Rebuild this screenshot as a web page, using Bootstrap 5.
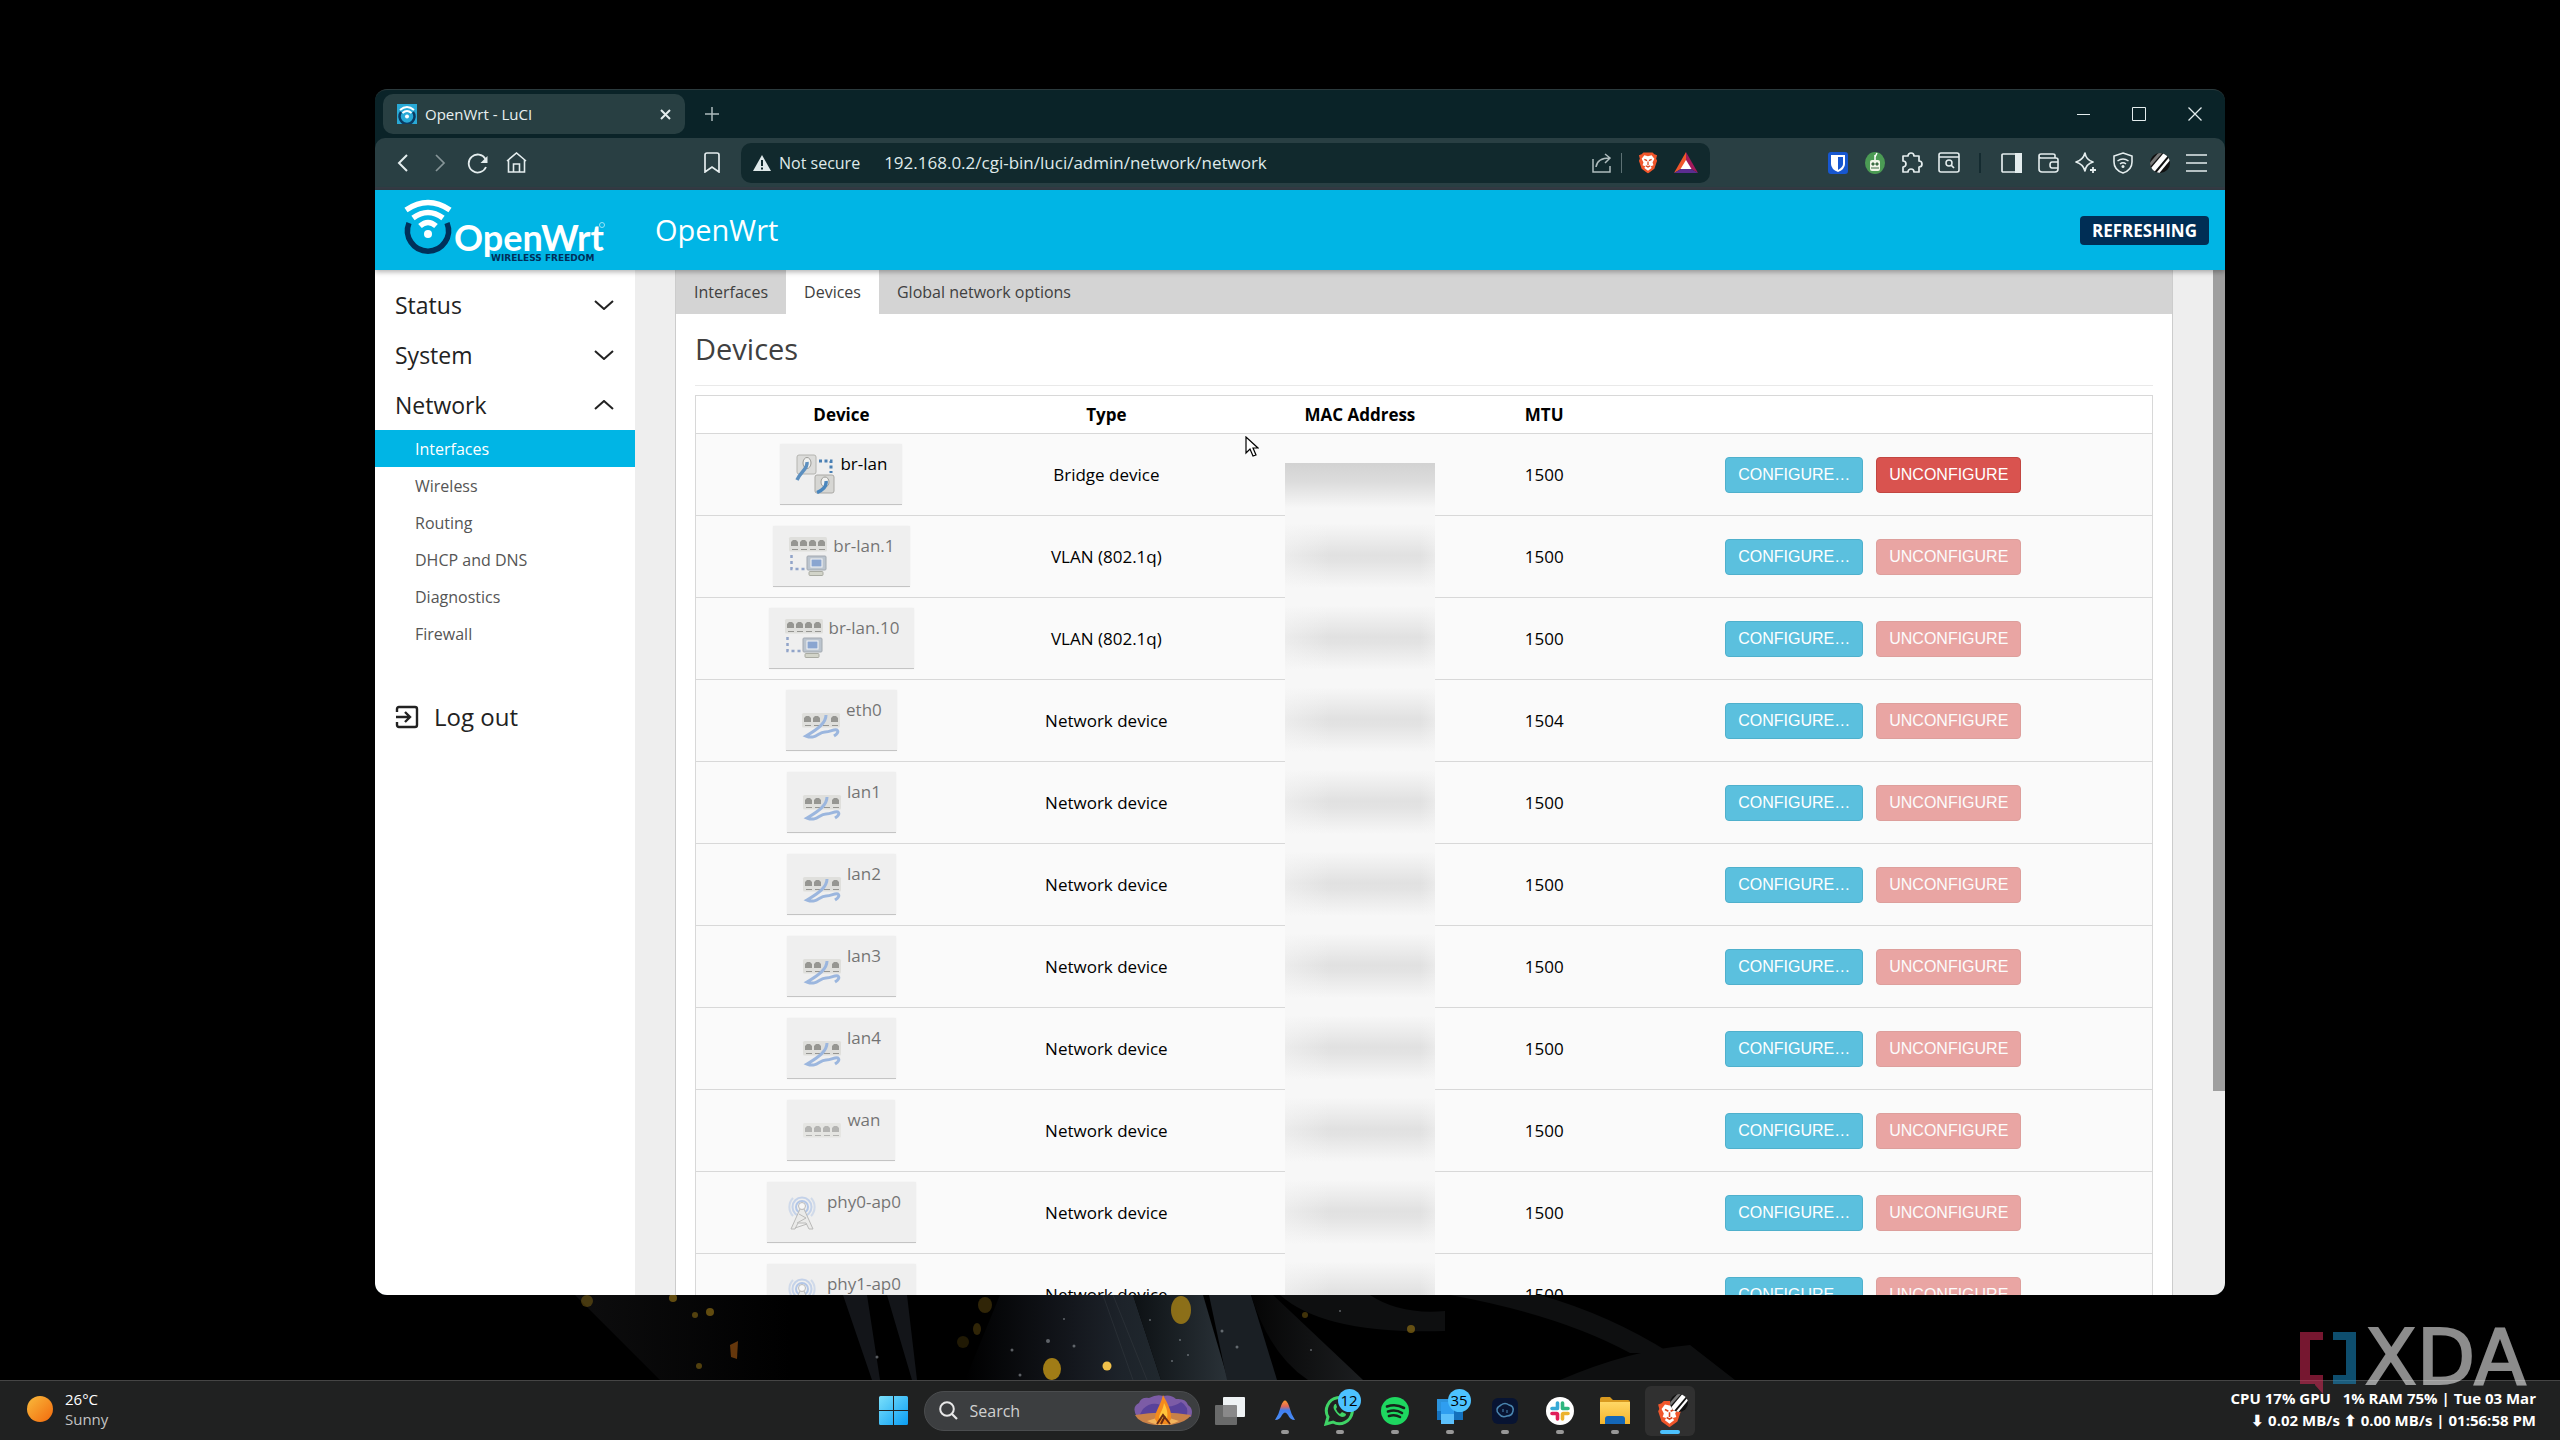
<!DOCTYPE html>
<html lang="en">
<head>
<meta charset="utf-8">
<meta name="viewport" content="width=device-width, initial-scale=1">
<title>OpenWrt - LuCI</title>
<link href="https://cdn.jsdelivr.net/npm/bootstrap@5.3.0/dist/css/bootstrap.min.css" rel="stylesheet">
<style>
body{font-family:"Open Sans","Noto Sans",sans-serif;font-size:16px;line-height:20px;color:#111;background:#000}
svg{display:block;flex:none}
a{text-decoration:none}
.desktop{background:#000;overflow:hidden}
.wallpaper{left:0;right:0;bottom:60px;width:100%;height:85px}
.stage{padding:89px 335px 85px 375px;min-height:0}
.browser{border-radius:12px;overflow:hidden;background:#0a2328;border-top:1px solid #2b3a3d}
/* browser chrome */
.tabstrip{height:48px;padding:0 2px 0 8px;color:#e8f0f1}
.tab-pill{width:302px;height:40px;border-radius:10px;background:#283f42;padding:0 14px;font-size:15px}
.chrome-btn{background:none;border:0;padding:0;color:#e4edee;display:flex;align-items:center;justify-content:center}
.tools{height:52px;background:#293f43;border-bottom:3px solid #343b44;padding:0 10px 0 8px;border-radius:10px 10px 0 0}
.tools .chrome-btn{width:38px;height:40px}
.ext .chrome-btn{width:37px}
.bookmark{margin-left:158px}
.address{height:40px;margin:0 109px 0 10px;border-radius:10px;background:#11292d;color:#dfe9ea;padding:0 12px 0 12px}
.address input{background:none;border:0;color:#dfe9ea;padding:0;outline:0;min-width:0;font-size:17px}
.addr-rule{width:1px;height:20px;background:#5d7174}
.ext-rule{width:26px}
.ext-rule::before{content:"";display:block;width:2px;height:20px;margin:auto;background:#142b30}
.winctl .chrome-btn{width:56px;height:48px}
/* LuCI */
.luci-head{height:80px;background:#00b5e5;color:#fff;padding:0 16px 0 20px;box-shadow:0 2px 5px rgba(0,0,0,.3);z-index:2}
.host{font-size:29px;line-height:40px;margin-left:49px;color:#fff}
.poll{height:29px;background:#002e55;border-radius:4px;padding:0 12px;font-size:17px;line-height:29px}
.lower{min-height:0}
.side{width:260px;background:#fff;padding-top:10px}
.side-top{height:50px;padding:0 21px 0 20px;font-size:23px;color:#222}
.side-sub{height:37px;padding-left:40px;color:#555}
.side-sub.current{background:#00b5e5;color:#fff}
.logout{margin-top:40px;gap:15px;font-size:24px}
.view{background:#eee;padding:0 40px}
.panel{background:#fff;border:1px solid #ccc;border-width:0 1px}
.luci-tabs{height:44px;background:#d4d4d4}
.luci-tabs a{padding:0 18px;color:#404040}
.luci-tabs a.current{background:#fff}
.panel-body{padding:0 19px}
.panel-title{height:72px;margin:0;font-size:29px;font-weight:400;color:#404040;border-bottom:1px solid #e9e9e9}
.devices{margin:9px 0 0;table-layout:fixed;border:1px solid #d8d8d8;font-size:17px;text-align:center;color:#000}
.devices th,.devices td{padding:0;vertical-align:middle;border-bottom:1px solid #d8d8d8;box-shadow:none;color:#000}
.devices thead tr{height:38px}
.devices tbody tr{height:82px;background:#fafafa}
.devices td{background:transparent}
.c-dev{width:20%}.c-type{width:16.4%}.c-mac{width:18.4%}.c-mtu{width:6.9%}
.port{background:#efefef;border-bottom:1px solid #c4c4c4;padding:10px 15px;gap:5px;vertical-align:middle;box-shadow:0 0 2px rgba(0,0,0,.05)}
.off>*{opacity:.52}
.veil{width:150px;top:-1px;bottom:-1px;background:
 linear-gradient(90deg,rgba(247,247,247,.5),rgba(247,247,247,0) 30%,rgba(247,247,247,0) 90%,rgba(247,247,247,.4)),
 linear-gradient(#f7f7f7 10%,#e1e1e1 48%,#e3e3e3 56%,#f7f7f7 88%)}
.veil-first{top:29px;background:linear-gradient(#d2d2d2,#dcdcdc 35%,#f7f7f7 85%)}
.acts{gap:13px}
.acts .btn{height:36px;padding:0 12px;border-radius:4px;font:16px/32px "Liberation Sans",Arial,sans-serif;color:#fff}
.btn-cfg{width:138px;background:#5bc0de;border:1px solid #4fb0cc}
.btn-del{width:145px;background:#d9534f;border:1px solid #c24641}
.acts .btn-del:disabled{background:#d9534f;border-color:#c24641;opacity:.5}
.scrolltrack{width:12px;background:#eee}
.scrollthumb{height:80.1%;background:#9e9e9e}
.pointer{left:1245px;top:436px}
/* taskbar */
.taskbar{height:60px;background:#202121;border-top:1px solid #454545;color:#fff;padding:0 24px}
.task-mid{gap:5px}
.task{width:50px;height:50px;border:0;padding:0;border-radius:6px;background:none;position:relative;display:flex;align-items:center;justify-content:center}
.task.run::after{content:"";position:absolute;bottom:2px;left:21px;width:8px;height:4px;border-radius:2px;background:#989898}
.task.front{background:#303030}
.task.front::after{left:15px;width:20px;background:#4cc2ff}
.count{position:absolute;top:3px;left:23px;height:23px;min-width:23px;padding:0 2px;border-radius:12px;background:#4cc2ff;color:#000;font-size:15px;line-height:22px}
.finder{width:276px;height:40px;border-radius:20px;background:#3c3e40;border:1px solid #4b4d4f;padding:0 6px 0 14px;gap:12px}
.finder input{background:none;border:0;outline:0;padding:0;color:#ddd;font-size:16px;min-width:0}
.finder input::placeholder{color:#d0d0d0;opacity:1}
.weather{padding:0 0 3px 3px;gap:12px;font-size:15px;line-height:20px}
.weather-note{color:#c4c4c4}
.stats{padding:0 0 3px;font-size:15px;line-height:22px;font-weight:700;text-align:right;white-space:pre}
.brandmark{right:34px;bottom:46px;opacity:.55;gap:9px;height:72px}
.brandmark span{font:76px/72px "DejaVu Sans",sans-serif;color:#fff;-webkit-text-stroke:2px #fff}
</style>
<script src="https://cdn.jsdelivr.net/npm/bootstrap@5.3.0/dist/js/bootstrap.bundle.min.js"></script>
</head>
<body>
<svg width="0" height="0" class="position-absolute">
 <defs>
  <linearGradient id="sun" x1="0" y1="0" x2="1" y2="1"><stop stop-color="#f9bb3c"/><stop offset="1" stop-color="#f2690d"/></linearGradient>
  <linearGradient id="win" x1="0" y1="0" x2="1" y2="1"><stop stop-color="#7be0fb"/><stop offset="1" stop-color="#0a9df2"/></linearGradient>
  <linearGradient id="fold" x1="0" y1="0" x2="0" y2="1"><stop stop-color="#ffd766"/><stop offset="1" stop-color="#f5b52c"/></linearGradient>
  <linearGradient id="arc" x1="0" y1="0" x2="0" y2="1"><stop stop-color="#ff9a2e"/><stop offset=".3" stop-color="#e0685a"/><stop offset=".5" stop-color="#3f7ff0"/><stop offset="1" stop-color="#4a8cf5"/></linearGradient>
 </defs>
 <symbol id="i-bridge" viewBox="0 0 40 40">
  <rect x="2" y="1" width="19" height="19" rx="2" fill="#dcdcda" stroke="#b4b4b0"/><ellipse cx="12" cy="9" rx="4" ry="5.500" fill="#f2f2f0" stroke="#9a9a96"/>
  <path d="M12 8C13 15 6 17 2 26" fill="none" stroke="#5c8fbf" stroke-width="3.500"/>
  <path d="M24 7h12v12" fill="none" stroke="#4a80b4" stroke-width="3" stroke-dasharray="3 2.500"/>
  <rect x="20" y="21" width="19" height="18" rx="2" fill="#d6d6d3" stroke="#aaa9a5"/><ellipse cx="30" cy="28" rx="4" ry="5" fill="#f2f2f0" stroke="#9a9a96"/>
  <path d="M31 27c1 6-3 9-9 11.500" fill="none" stroke="#4a86bd" stroke-width="3.500"/>
 </symbol>
 <symbol id="i-four" viewBox="0 0 40 15">
  <rect x="1" y="0" width="38" height="14.500" rx="1.500" fill="#d2d2cc"/>
  <g fill="#45453e"><path d="M3 9V5l2-2h3l2 2v4zM12 9V5l2-2h3l2 2v4zM21 9V5l2-2h3l2 2v4zM30 9V5l2-2h3l2 2v4z"/><path d="M4 12h6v1H4zM13 12h6v1h-6zM22 12h6v1h-6zM31 12h6v1h-6z"/></g>
 </symbol>
 <symbol id="i-vlan" viewBox="0 0 40 40">
  <use href="#i-four" y="1" width="40" height="15"/>
  <path d="M3.500 19v14h14" fill="none" stroke="#3c60a8" stroke-width="2.500" stroke-dasharray="3 3"/>
  <rect x="19" y="20" width="19" height="14" rx="1" fill="#8c9db0" stroke="#5f6c79"/><rect x="23" y="23" width="11" height="8" fill="#2f63b4" stroke="#fff"/><rect x="21" y="35.500" width="14" height="4" rx="1" fill="#b9bca8" stroke="#6b6e5c"/>
 </symbol>
 <symbol id="i-eth" viewBox="0 0 40 40">
  <use href="#i-four" y="13" width="40" height="15"/><rect x="20" y="15" width="9" height="10" fill="#d2d2cc"/>
  <path d="M25 15c0 8-8 14-20 21 10 4 12-4 19-4 6 0 8-3 12-2 2 2 0 4-3 6" fill="none" stroke="#4f83d0" stroke-width="3"/>
 </symbol>
 <symbol id="i-wan" viewBox="0 0 40 40"><use href="#i-four" y="13" width="40" height="15" opacity=".65"/></symbol>
 <symbol id="i-wifi" viewBox="0 0 40 40">
  <g fill="none" stroke="#7ca2e0" stroke-width="2"><circle cx="20" cy="15" r="6"/><circle cx="20" cy="15" r="9.500" opacity=".7"/><path d="M11 24A13 13 0 0 1 11 6M29 24A13 13 0 0 0 29 6" opacity=".5"/></g>
  <path d="M18 17L9 37h4l3-6h8l3 6h4L22 17z" fill="#e6e6e4" stroke="#8a8a88"/><path d="M15 31l9-5-7-4M13 36l12-4" fill="none" stroke="#8a8a88"/><circle cx="20" cy="14" r="3.500" fill="#fff" stroke="#8a8a8a"/>
 </symbol>
 <symbol id="i-brave" viewBox="0 0 22 24">
  <path d="M6 1h10l2 2 3 1-1 4 1 2-3 9-7 5-7-5-3-9 1-2-1-4 3-1z" fill="#f1562b"/>
  <path d="M11 5l4-1 3 4-2 4 1 3-3 1 1 2-4 3-4-3 1-2-3-1 1-3-2-4 3-4z" fill="#fff"/>
  <path d="M7 8.500l3 1.500M15 8.500L12 10M11 11v4M8.500 15.500L11 17l2.500-1.500" fill="none" stroke="#d9441c" stroke-width="1.400"/>
 </symbol>
 <symbol id="i-down" viewBox="0 0 20 10"><path d="M1 1l9 8 9-8" fill="none" stroke="#222" stroke-width="2"/></symbol>
 <symbol id="i-stripe" viewBox="0 0 20 20"><clipPath id="rc"><circle cx="10" cy="10" r="10"/></clipPath><g clip-path="url(#rc)"><path fill="#111" d="M0 0h20v20H0z"/><path d="M-2 14L12-2" stroke="#777" stroke-width="3"/><path d="M1 19L17 0" stroke="#fff" stroke-width="5"/><path d="M7 21L21 4" stroke="#fff" stroke-width="2.500"/></g></symbol>
</svg>

<div class="desktop vh-100 d-flex flex-column position-relative">
 <svg class="wallpaper position-absolute" viewBox="0 0 2560 85" preserveAspectRatio="xMidYMid slice">
  <defs>
   <linearGradient id="w1"><stop stop-color="#000"/><stop offset=".55" stop-color="#14171d"/><stop offset=".8" stop-color="#1d232a"/><stop offset="1" stop-color="#20282e"/></linearGradient>
   <linearGradient id="w2"><stop stop-color="#0d1114"/><stop offset="1" stop-color="#2a3238"/></linearGradient>
   <linearGradient id="w3"><stop stop-color="#050505"/><stop offset="1" stop-color="#1c1e20"/></linearGradient>
   <linearGradient id="w4"><stop stop-color="#0d0d0e"/><stop offset="1" stop-color="#000"/></linearGradient>
  </defs>
  <path d="M575 0H790V85H660Z" fill="url(#w4)"/>
  <path d="M843 0h24l13 85h-8zM887 0h20l10 85h-5z" fill="#131519"/>
  <path d="M1000 0h133l28 85H965Z" fill="url(#w1)"/>
  <path d="M1133 0h70l25 85h-67z" fill="url(#w2)"/>
  <path d="M1209 0h42l26 85h-50z" fill="#1a1f24"/>
  <path d="M1251 0h22l90 85h-55Q1270 60 1251 0z" fill="url(#w3)"/>
  <path d="M1280 0h90q30 20 75 16v20q-120 4-165-36z" fill="#0e0f10"/>
  <path d="M1450 0h90q70 20 130 58h-40Q1560 20 1450 0zM1560 85q70-30 130-35l45 35z" fill="#0e0f10"/>
  <path d="M1103 0l30 85M1113 0l34 85" stroke="#3c4248" opacity=".4"/>
  <g fill="#a07c16"><ellipse cx="1181" cy="15" rx="10" ry="14" opacity=".85"/><ellipse cx="1052" cy="74" rx="9" ry="11"/><circle cx="1107" cy="71" r="4.500" fill="#f0c04a"/><ellipse cx="985" cy="10" rx="7" ry="8" opacity=".3"/><ellipse cx="977" cy="34" rx="4" ry="6" opacity=".3"/><ellipse cx="963" cy="47" rx="6" ry="6" opacity=".2"/><circle cx="587" cy="6" r="6" opacity=".4"/><circle cx="673" cy="3" r="4" opacity=".6"/><circle cx="710" cy="17" r="4" opacity=".6"/><circle cx="695" cy="20" r="3" opacity=".5"/><path d="M730 50l8-4-1 18-6-2z" opacity=".6" fill="#a65a12"/><circle cx="699" cy="71" r="3" opacity=".5"/><circle cx="1411" cy="34" r="4" opacity=".6"/><circle cx="1305" cy="20" r="3" opacity=".4"/></g>
  <g fill="#aeb4ba" opacity=".5"><circle cx="1048" cy="46" r="2"/><circle cx="1074" cy="51" r="1.500"/><circle cx="1150" cy="25" r="1"/><circle cx="1180" cy="45" r="1"/><circle cx="1188" cy="60" r="1"/><circle cx="1172" cy="66" r="1"/><circle cx="1222" cy="36" r="1.500"/><circle cx="1237" cy="52" r="1.500"/><circle cx="1064" cy="24" r="1"/><circle cx="1012" cy="55" r="1.500"/><circle cx="1020" cy="80" r="1.500"/><circle cx="877" cy="62" r="1.500"/><circle cx="1340" cy="16" r="1"/><circle cx="1311" cy="55" r="1"/></g>
 </svg>

 <main class="stage flex-grow-1 d-flex">
  <section class="browser flex-grow-1 d-flex flex-column">
   <div class="tabstrip flex-shrink-0 d-flex align-items-center">
    <div class="tab-pill d-flex align-items-center">
     <svg width="20" height="20" viewBox="0 0 20 20"><path fill="#29a9d6" d="M0 0h20v20H0z"/><path d="M4 8a7.500 7.500 0 1 0 12 0" fill="none" stroke="#0b3b63" stroke-width="2.500"/><path d="M3 6q7-6 14 0M5.500 9q4.500-4 9 0" fill="none" stroke="#fff" stroke-width="2"/><circle cx="10" cy="12.500" r="2" fill="#fff"/></svg>
     <span class="ms-2 flex-grow-1">OpenWrt - LuCI</span>
     <button class="chrome-btn" aria-label="Close tab"><svg width="11" height="11" viewBox="0 0 11 11"><path d="M1 1l9 9M10 1l-9 9" stroke="currentColor" stroke-width="2"/></svg></button>
    </div>
    <button class="chrome-btn ms-3 ps-1 opacity-75" aria-label="New tab"><svg width="14" height="14" viewBox="0 0 14 14"><path d="M7 0v14M0 7h14" stroke="currentColor" stroke-width="1.500"/></svg></button>
    <div class="winctl d-flex ms-auto">
     <button class="chrome-btn" aria-label="Minimize"><svg width="13" height="13" viewBox="0 0 13 13"><path d="M0 6.500h13" stroke="currentColor"/></svg></button>
     <button class="chrome-btn" aria-label="Maximize"><svg width="14" height="14" viewBox="0 0 14 14"><path d="M.5.5h13v13H.5z" fill="none" stroke="currentColor"/></svg></button>
     <button class="chrome-btn" aria-label="Close"><svg width="14" height="14" viewBox="0 0 14 14"><path d="M.5.5l13 13M13.500.5l-13 13" stroke="currentColor" stroke-width="1.300"/></svg></button>
    </div>
   </div>
   <div class="tools flex-shrink-0 d-flex align-items-center">
    <button class="chrome-btn" aria-label="Back"><svg width="11" height="18" viewBox="0 0 11 18"><path d="M10 1L2 9l8 8" fill="none" stroke="currentColor" stroke-width="2"/></svg></button>
    <button class="chrome-btn opacity-50" aria-label="Forward"><svg width="11" height="18" viewBox="0 0 11 18"><path d="M1 1l8 8-8 8" fill="none" stroke="currentColor" stroke-width="1.700"/></svg></button>
    <button class="chrome-btn" aria-label="Reload"><svg width="22" height="22" viewBox="0 0 22 22"><path d="M18.500 7A9 9 0 1 0 19 15" fill="none" stroke="currentColor" stroke-width="1.800"/><path d="M20.500 4v7h-7z" fill="currentColor"/></svg></button>
    <button class="chrome-btn" aria-label="Home"><svg width="21" height="21" viewBox="0 0 21 21"><path d="M1 9l9.500-8L20 9M2.500 8v12h16V8M7.500 20v-8h6v8" fill="none" stroke="currentColor" stroke-width="1.600"/></svg></button>
    <button class="chrome-btn bookmark" aria-label="Bookmark"><svg width="16" height="21" viewBox="0 0 16 21"><path d="M1 3q0-2 2-2h10q2 0 2 2v17l-7-5-7 5z" fill="none" stroke="currentColor" stroke-width="1.700"/></svg></button>
    <div class="address flex-grow-1 d-flex align-items-center">
     <svg width="18" height="16" viewBox="0 0 18 16"><path d="M9 0l9 16H0z" fill="#dfe9ea"/><path d="M9 5v6M9 12.500v2" stroke="#11292d" stroke-width="2"/></svg>
     <label for="url" class="ms-2 me-4">Not secure</label>
     <input id="url" class="flex-grow-1" value="192.168.0.2/cgi-bin/luci/admin/network/network">
     <button class="chrome-btn opacity-75" aria-label="Share"><svg width="21" height="20" viewBox="0 0 21 20"><path d="M1 6v13h17v-6M4 14q1-9 14-9M13 1l5 4-5 5" fill="none" stroke="currentColor" stroke-width="1.500"/></svg></button>
     <span class="addr-rule"></span>
     <svg class="ms-3 me-3" width="20" height="23" viewBox="0 0 22 24"><use href="#i-brave" width="22" height="24"/></svg>
     <svg width="24" height="21" viewBox="0 0 24 21"><path d="M12 0L0 21l12-7z" fill="#f1562b"/><path d="M12 0l12 21-12-7z" fill="#a3195b"/><path d="M0 21h24l-12-7z" fill="#5b2d90"/><path d="M12 8l-5.500 9h11z" fill="#fff"/></svg>
    </div>
    <div class="ext d-flex align-items-center">
     <button class="chrome-btn" aria-label="Bitwarden"><svg width="20" height="22" viewBox="0 0 20 22"><rect width="20" height="22" rx="3" fill="#1757d0"/><path d="M3 3h14v9q0 5-7 8-7-3-7-8z" fill="#fff"/><path d="M10 5h5v7q0 3-5 6z" fill="#1757d0"/></svg></button>
     <button class="chrome-btn" aria-label="Robot"><svg width="20" height="22" viewBox="0 0 20 22"><ellipse cx="10" cy="11" rx="10" ry="11" fill="#4b9b54"/><path d="M10 3v6M12 1l-2 4" stroke="#fff" stroke-width="1.500"/><rect x="5" y="8" width="10" height="11" rx="2" fill="#f0f4e8"/><path d="M7 11h2v2H7zM11 11h2v2h-2zM6 16h8" stroke="#3b6b42" fill="#3b6b42"/></svg></button>
     <button class="chrome-btn" aria-label="Extensions"><svg width="22" height="22" viewBox="0 0 22 22"><path d="M2 4h5a3 3 0 0 1 6 0h5v5a3 3 0 0 1 0 6v5h-5a3 3 0 0 0-6 0H2v-5a3 3 0 0 0 0-6z" fill="none" stroke="currentColor" stroke-width="1.700" stroke-linejoin="round"/></svg></button>
     <button class="chrome-btn" aria-label="Page search"><svg width="22" height="21" viewBox="0 0 22 21"><rect x="1" y="1" width="20" height="19" rx="2" fill="none" stroke="currentColor" stroke-width="1.600"/><path d="M1 5h20" stroke="currentColor" stroke-width="1.600"/><circle cx="11" cy="11" r="3" fill="none" stroke="currentColor" stroke-width="1.500"/><path d="M13 13l3 3" stroke="currentColor" stroke-width="1.700"/></svg></button>
     <span class="ext-rule"></span>
     <button class="chrome-btn" aria-label="Sidebar"><svg width="21" height="20" viewBox="0 0 21 20"><rect x="1" y="1" width="19" height="18" rx="1" fill="none" stroke="currentColor" stroke-width="1.700"/><path d="M14 0h7v20h-7z" fill="currentColor"/></svg></button>
     <button class="chrome-btn" aria-label="Wallet"><svg width="21" height="20" viewBox="0 0 21 20"><path d="M17 5V2q0-1-2-1H3Q1 1 1 3v13q0 3 3 3h13q3 0 3-3V7q0-2-2-2H3Q1 5 1 3M20 9h-6q-2 0-2 3t2 3h6" fill="none" stroke="currentColor" stroke-width="1.600"/></svg></button>
     <button class="chrome-btn" aria-label="Leo"><svg width="22" height="22" viewBox="0 0 22 22"><path d="M10 1q1 7 8 9-7 2-8 9-2-7-9-9 7-2 9-9z" fill="none" stroke="currentColor" stroke-width="1.700" stroke-linejoin="round"/><path d="M18 15v6M15 18h6" stroke="currentColor" stroke-width="1.800"/></svg></button>
     <button class="chrome-btn" aria-label="VPN"><svg width="20" height="22" viewBox="0 0 20 22"><path d="M10 1l9 3v6q0 8-9 11Q1 18 1 10V4z" fill="none" stroke="currentColor" stroke-width="1.600"/><path d="M4.500 9q5.500-4 11 0M7 12q3-2.500 6 0" fill="none" stroke="currentColor" stroke-width="1.500"/><circle cx="10" cy="14.500" r="1.500" fill="currentColor"/></svg></button>
     <button class="chrome-btn" aria-label="Profile"><svg width="20" height="20"><use href="#i-stripe"/></svg></button>
     <button class="chrome-btn" aria-label="Menu"><svg width="21" height="18" viewBox="0 0 21 18"><path d="M0 1h21M0 9h21M0 17h21" stroke="currentColor" stroke-width="1.700"/></svg></button>
    </div>
   </div>

   <header class="luci-head flex-shrink-0 d-flex align-items-center position-relative">
    <svg width="211" height="80" viewBox="0 0 211 80" role="img" aria-label="OpenWrt wireless freedom">
     <path d="M14 33a20.500 20.500 0 1 0 38 0" fill="none" stroke="#00305a" stroke-width="5.500"/>
     <g fill="none" stroke="#fff" stroke-width="5.500"><path d="M11 20q22-15 44 0"/><path d="M18 28q15-11 30 0"/><path d="M25 36q8-7 16 0"/></g><circle cx="33" cy="44" r="4" fill="#fff"/>
     <text x="59" y="61" font-family="Lato,sans-serif" font-weight="700" font-size="36" fill="#fff">OpenWrt</text>
     <text x="96" y="71" font-family="DejaVu Sans,sans-serif" font-weight="700" font-size="9" fill="#00305a">WIRELESS FREEDOM</text>
     <circle cx="207" cy="35" r="2.500" fill="none" stroke="#9be3f7"/>
    </svg>
    <a class="host" href="#">OpenWrt</a>
    <span class="poll ms-auto fw-bold">REFRESHING</span>
   </header>

   <div class="lower flex-grow-1 d-flex overflow-hidden">
    <nav class="side flex-shrink-0">
     <a class="side-top d-flex align-items-center justify-content-between" href="#">Status<svg width="20" height="10"><use href="#i-down"/></svg></a>
     <a class="side-top d-flex align-items-center justify-content-between" href="#">System<svg width="20" height="10"><use href="#i-down"/></svg></a>
     <a class="side-top d-flex align-items-center justify-content-between" href="#">Network<svg width="20" height="10" viewBox="0 0 20 10"><path d="M1 9l9-8 9 8" fill="none" stroke="#222" stroke-width="2"/></svg></a>
     <a class="side-sub current d-flex align-items-center" href="#">Interfaces</a>
     <a class="side-sub d-flex align-items-center" href="#">Wireless</a>
     <a class="side-sub d-flex align-items-center" href="#">Routing</a>
     <a class="side-sub d-flex align-items-center" href="#">DHCP and DNS</a>
     <a class="side-sub d-flex align-items-center" href="#">Diagnostics</a>
     <a class="side-sub d-flex align-items-center" href="#">Firewall</a>
     <a class="side-top logout d-flex align-items-center" href="#"><svg width="24" height="24" viewBox="0 0 24 24"><path d="M2 7V4q0-2 2-2h16q2 0 2 2v16q0 2-2 2H4q-2 0-2-2v-3M1 12h14M10 7l5 5-5 5" fill="none" stroke="#222" stroke-width="2.400"/></svg>Log out</a>
    </nav>
    <div class="view flex-grow-1">
     <div class="panel">
      <nav class="luci-tabs d-flex">
       <a class="d-flex align-items-center" href="#">Interfaces</a>
       <a class="current d-flex align-items-center" href="#">Devices</a>
       <a class="d-flex align-items-center" href="#">Global network options</a>
      </nav>
      <div class="panel-body">
       <h2 class="panel-title d-flex align-items-center">Devices</h2>
       <table class="table devices">
        <thead><tr><th class="c-dev">Device</th><th class="c-type">Type</th><th class="c-mac">MAC Address</th><th class="c-mtu">MTU</th><th></th></tr></thead>
        <tbody>
         <tr><td><span class="port d-inline-flex"><svg width="40" height="40"><use href="#i-bridge"/></svg><span>br-lan</span></span></td><td>Bridge device</td><td class="position-relative"><div class="veil veil-first position-absolute start-50 translate-middle-x"></div></td><td>1500</td><td><div class="acts d-flex justify-content-center"><button class="btn btn-cfg">CONFIGURE…</button><button class="btn btn-del">UNCONFIGURE</button></div></td></tr>
         <tr><td><span class="port off d-inline-flex"><svg width="40" height="40"><use href="#i-vlan"/></svg><span>br-lan.1</span></span></td><td>VLAN (802.1q)</td><td class="position-relative"><div class="veil position-absolute start-50 translate-middle-x"></div></td><td>1500</td><td><div class="acts d-flex justify-content-center"><button class="btn btn-cfg">CONFIGURE…</button><button class="btn btn-del" disabled>UNCONFIGURE</button></div></td></tr>
         <tr><td><span class="port off d-inline-flex"><svg width="40" height="40"><use href="#i-vlan"/></svg><span>br-lan.10</span></span></td><td>VLAN (802.1q)</td><td class="position-relative"><div class="veil position-absolute start-50 translate-middle-x"></div></td><td>1500</td><td><div class="acts d-flex justify-content-center"><button class="btn btn-cfg">CONFIGURE…</button><button class="btn btn-del" disabled>UNCONFIGURE</button></div></td></tr>
         <tr><td><span class="port off d-inline-flex"><svg width="40" height="40"><use href="#i-eth"/></svg><span>eth0</span></span></td><td>Network device</td><td class="position-relative"><div class="veil position-absolute start-50 translate-middle-x"></div></td><td>1504</td><td><div class="acts d-flex justify-content-center"><button class="btn btn-cfg">CONFIGURE…</button><button class="btn btn-del" disabled>UNCONFIGURE</button></div></td></tr>
         <tr><td><span class="port off d-inline-flex"><svg width="40" height="40"><use href="#i-eth"/></svg><span>lan1</span></span></td><td>Network device</td><td class="position-relative"><div class="veil position-absolute start-50 translate-middle-x"></div></td><td>1500</td><td><div class="acts d-flex justify-content-center"><button class="btn btn-cfg">CONFIGURE…</button><button class="btn btn-del" disabled>UNCONFIGURE</button></div></td></tr>
         <tr><td><span class="port off d-inline-flex"><svg width="40" height="40"><use href="#i-eth"/></svg><span>lan2</span></span></td><td>Network device</td><td class="position-relative"><div class="veil position-absolute start-50 translate-middle-x"></div></td><td>1500</td><td><div class="acts d-flex justify-content-center"><button class="btn btn-cfg">CONFIGURE…</button><button class="btn btn-del" disabled>UNCONFIGURE</button></div></td></tr>
         <tr><td><span class="port off d-inline-flex"><svg width="40" height="40"><use href="#i-eth"/></svg><span>lan3</span></span></td><td>Network device</td><td class="position-relative"><div class="veil position-absolute start-50 translate-middle-x"></div></td><td>1500</td><td><div class="acts d-flex justify-content-center"><button class="btn btn-cfg">CONFIGURE…</button><button class="btn btn-del" disabled>UNCONFIGURE</button></div></td></tr>
         <tr><td><span class="port off d-inline-flex"><svg width="40" height="40"><use href="#i-eth"/></svg><span>lan4</span></span></td><td>Network device</td><td class="position-relative"><div class="veil position-absolute start-50 translate-middle-x"></div></td><td>1500</td><td><div class="acts d-flex justify-content-center"><button class="btn btn-cfg">CONFIGURE…</button><button class="btn btn-del" disabled>UNCONFIGURE</button></div></td></tr>
         <tr><td><span class="port off d-inline-flex"><svg width="40" height="40"><use href="#i-wan"/></svg><span>wan</span></span></td><td>Network device</td><td class="position-relative"><div class="veil position-absolute start-50 translate-middle-x"></div></td><td>1500</td><td><div class="acts d-flex justify-content-center"><button class="btn btn-cfg">CONFIGURE…</button><button class="btn btn-del" disabled>UNCONFIGURE</button></div></td></tr>
         <tr><td><span class="port off d-inline-flex"><svg width="40" height="40"><use href="#i-wifi"/></svg><span>phy0-ap0</span></span></td><td>Network device</td><td class="position-relative"><div class="veil position-absolute start-50 translate-middle-x"></div></td><td>1500</td><td><div class="acts d-flex justify-content-center"><button class="btn btn-cfg">CONFIGURE…</button><button class="btn btn-del" disabled>UNCONFIGURE</button></div></td></tr>
         <tr><td><span class="port off d-inline-flex"><svg width="40" height="40"><use href="#i-wifi"/></svg><span>phy1-ap0</span></span></td><td>Network device</td><td class="position-relative"><div class="veil position-absolute start-50 translate-middle-x"></div></td><td>1500</td><td><div class="acts d-flex justify-content-center"><button class="btn btn-cfg">CONFIGURE…</button><button class="btn btn-del" disabled>UNCONFIGURE</button></div></td></tr>
        </tbody>
       </table>
      </div>
     </div>
    </div>
    <div class="scrolltrack flex-shrink-0"><div class="scrollthumb"></div></div>
   </div>
  </section>
 </main>

 <footer class="taskbar flex-shrink-0 d-flex align-items-center position-relative">
  <div class="col d-flex align-items-center weather">
   <svg width="26" height="26"><circle cx="13" cy="13" r="13" fill="url(#sun)"/></svg>
   <div><div>26°C</div><div class="weather-note">Sunny</div></div>
  </div>
  <div class="task-mid d-flex align-items-center">
   <button class="task" aria-label="Start"><svg width="29" height="29" viewBox="0 0 29 29"><path d="M1.500 0H14v14H0V1.500Q0 0 1.500 0zM15 0h12.500Q29 0 29 1.500V14H15zM0 15h14v14H1.500Q0 29 0 27.500zM15 15h14v12.500q0 1.500-1.500 1.500H15z" fill="url(#win)"/></svg></button>
   <div class="finder d-flex align-items-center">
    <svg width="19" height="19" viewBox="0 0 19 19"><circle cx="8" cy="8" r="6.800" fill="none" stroke="#e8e8e8" stroke-width="2"/><path d="M13 13l5 5" stroke="#e8e8e8" stroke-width="2.200"/></svg>
    <input type="search" class="flex-grow-1" placeholder="Search" aria-label="Search">
    <svg width="60" height="32" viewBox="0 0 60 32"><path d="M4 22Q-2 12 6 8q2-6 10-5 8-4 14-2 8-2 13 3 10-1 12 6 6 4 3 12z" fill="#7c5ca6"/><path d="M10 14q8-8 18-4t20-3q8 4 6 14H6z" fill="#59429a"/><path d="M2 20q28-5 56 0-4 7-20 10H22Q6 28 2 20z" fill="#c98148"/><path d="M14 26q16-7 32 0-16 8-32 0z" fill="#f3b45c"/><path d="M30 0c4 8 9 15 8 24l-3 5H25l-3-5c0-8 5-12 8-24z" fill="#f48a1c"/><path d="M31 8c3 6 4 9 3 16h-8c0-6 4-8 5-16z" fill="#ffc43a"/><path d="M24 29l6-9 7 9M28 29l4-8" stroke="#6b2c12" stroke-width="2" fill="none"/></svg>
   </div>
   <button class="task" aria-label="Task view"><svg width="30" height="28" viewBox="0 0 30 28"><rect x="8" width="22" height="20" rx="1" fill="#eef2f4"/><rect y="8" width="22" height="20" rx="1" fill="#777" opacity=".85"/></svg></button>
   <button class="task run" aria-label="Launcher"><svg width="22" height="22" viewBox="0 0 22 22"><path d="M1 20Q5 14 7 6q4-11 8 0 2 8 6 14-5 0-7-5-3-5-6 0-2 5-7 5z" fill="url(#arc)"/></svg></button>
   <button class="task run" aria-label="WhatsApp"><svg width="31" height="31" viewBox="0 0 31 31"><path d="M2 29l2-7A13 13 0 1 1 9 27z" fill="#202121" stroke="#3fd366" stroke-width="3"/><path d="M11 9q-3 3 0 7 3 5 7 6 4 0 4-3l-4-2-2 2q-3-2-4-5l1-2-1-3z" fill="#3fd366"/></svg><span class="count">12</span></button>
   <button class="task run" aria-label="Spotify"><svg width="28" height="28" viewBox="0 0 28 28"><circle cx="14" cy="14" r="14" fill="#1ed760"/><path d="M6 9.500q9-3 17 1.500M7 14.500q8-2.500 14 1.500M8 19q6-2 11 1" fill="none" stroke="#16231b" stroke-width="2.600" stroke-linecap="round"/></svg></button>
   <button class="task run" aria-label="Phone"><svg width="30" height="28" viewBox="0 0 30 28"><path d="M2 2h16v20H2z" fill="#2b93dd"/><path d="M2 14h26v9H2z" fill="#1471bd"/><path d="M6 5h13v22H6z" fill="#2f9ef0"/><path d="M6 17h13v10H6z" fill="#5cc0fb"/></svg><span class="count">35</span></button>
   <button class="task run" aria-label="Assistant"><svg width="26" height="26" viewBox="0 0 26 26"><rect width="26" height="26" rx="6" fill="#081432"/><path d="M9 7q4-3 8 0 5 1 4 6-1 5-6 5-5 2-8-2-5-5 2-9z" fill="none" stroke="#4a86b0" stroke-width="1.500"/><path d="M11 11v3M15 12v3" stroke="#4a86b0"/></svg></button>
   <button class="task run" aria-label="Slack"><svg width="28" height="28" viewBox="0 0 28 28"><circle cx="14" cy="14" r="14" fill="#fff"/><g stroke-width="3.600" stroke-linecap="round"><path d="M11.500 6v5M6 11.500h5.500" stroke="#36a9d6"/><path d="M16.500 6v5.500M17 11.500h5" stroke="#2eb67d"/><path d="M16.500 17v5M17 16.500h5" stroke="#ecb22e"/><path d="M11.500 17v5M6 16.500h5" stroke="#e01e5a"/></g></svg></button>
   <button class="task run" aria-label="Files"><svg width="30" height="27" viewBox="0 0 30 27"><path d="M0 2q0-2 2-2h8l3 3h15q2 0 2 2v8H0z" fill="#d99a20"/><path d="M0 5h30v22H0z" fill="url(#fold)"/><path d="M5 27v-5q0-3 3-3h14q3 0 3 3v5z" fill="#1467b8"/></svg></button>
   <button class="task run front" aria-label="Brave"><svg width="36" height="40" viewBox="0 0 36 40"><use href="#i-brave" x="5" y="8" width="25" height="29"/><use href="#i-stripe" x="18" y="2" width="18" height="20"/></svg></button>
  </div>
  <div class="col stats">CPU 17% GPU   1% RAM 75% | Tue 03 Mar
⬇ 0.02 MB/s ⬆ 0.00 MB/s | 01:56:58 PM</div>
 </footer>

 <div class="brandmark position-absolute d-flex align-items-center pe-none">
  <svg width="56" height="72" viewBox="0 0 56 72"><path d="M0 10h23v8H10v35h13v19l-8-9v-1H0z" fill="#d82b58"/><path d="M33 10h23v52H33v-9h13V18H33z" fill="#1a8fc9"/></svg>
  <span>XDA</span>
 </div>
 <svg class="pointer position-absolute" width="14" height="21" viewBox="0 0 14 21"><path d="M1 1v16l4-4 3 7 3-1-3-7h5z" fill="#fff" stroke="#000" stroke-width="1.200"/></svg>
</div>
</body>
</html>
